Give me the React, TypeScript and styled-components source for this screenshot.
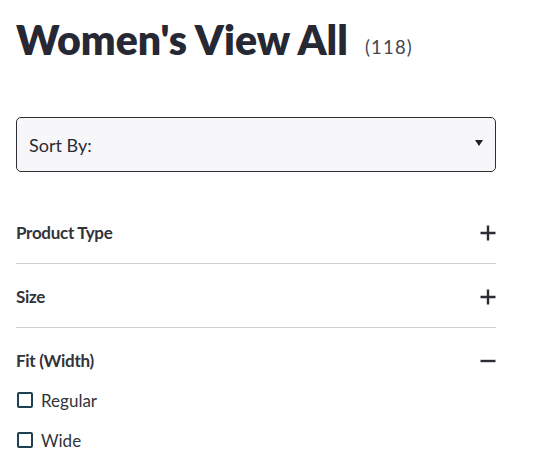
import React, { useState } from 'react'
import styled, { createGlobalStyle } from 'styled-components'

const GlobalStyle = createGlobalStyle`
  body {
    margin: 0;
    background: #ffffff;
    font-family: Lato, "Noto Sans", Arial, sans-serif;
    color: #2b2b33;
  }
`

interface Filter {
  label: string
  options: string[]
  open?: boolean
}

const filters: Filter[] = [
  { label: 'Product Type', options: [] },
  { label: 'Size', options: [] },
  { label: 'Fit (Width)', options: ['Regular', 'Wide'], open: true },
]

const PlusIcon = () => (
  <svg width="16" height="16" viewBox="0 0 16 16">
    <path d="M8 0.5v15M0.5 8h15" stroke="#2b2b33" strokeWidth="2.4" />
  </svg>
)

const MinusIcon = () => (
  <svg width="16" height="16" viewBox="0 0 16 16">
    <path d="M0.5 8h15" stroke="#2b2b33" strokeWidth="2.4" />
  </svg>
)

const FilterSection: React.FC<{ filter: Filter }> = ({ filter }) => {
  const [open, setOpen] = useState(!!filter.open)
  return (
    <StyledSection open={open}>
      <StyledSectionHeader onClick={() => setOpen(!open)}>
        <StyledSectionLabel>{filter.label}</StyledSectionLabel>
        {open ? <MinusIcon /> : <PlusIcon />}
      </StyledSectionHeader>
      {open && (
        <StyledOptionList>
          {filter.options.map((o) => (
            <StyledOption key={o}>
              <StyledCheckbox type="checkbox" />
              {o}
            </StyledOption>
          ))}
        </StyledOptionList>
      )}
    </StyledSection>
  )
}

const App: React.FC = () => {
  return (
    <>
      <GlobalStyle />
      <StyledPage>
        <StyledTitleRow>
          <StyledTitle>Women's View All</StyledTitle>
          <StyledCount>(118)</StyledCount>
        </StyledTitleRow>
        <StyledSelect>
          <span>Sort By:</span>
          <StyledArrow />
        </StyledSelect>
        <StyledFilters>
          {filters.map((f) => (
            <FilterSection key={f.label} filter={f} />
          ))}
        </StyledFilters>
      </StyledPage>
    </>
  )
}

const StyledPage = styled.div`
  padding: 0 40px 0 16px;
  width: 480px;
`

const StyledTitleRow = styled.div`
  display: flex;
  align-items: baseline;
  padding-top: 14px;
  height: 64px;
`

const StyledTitle = styled.h1`
  margin: 0;
  font-size: 41px;
  line-height: 52px;
  font-weight: 800;
  color: #262833;
  letter-spacing: 0;
`

const StyledCount = styled.span`
  margin-left: 17px;
  font-size: 18.5px;
  color: #46464e;
  letter-spacing: 1.2px;
  position: relative;
  top: -1px;
`

const StyledSelect = styled.div`
  margin-top: 39px;
  height: 55px;
  box-sizing: border-box;
  border: 1px solid #2f2f36;
  border-radius: 5px;
  background: #f7f7fa;
  display: flex;
  align-items: center;
  justify-content: space-between;
  padding: 0 12px 0 12px;
  font-size: 18px;
  color: #2b2b33;
`

const StyledArrow = styled.span`
  width: 0;
  height: 0;
  border-left: 4.5px solid transparent;
  border-right: 4.5px solid transparent;
  border-top: 6px solid #222;
  margin-top: -3px;
`

const StyledFilters = styled.div`
  margin-top: 28px;
`

const StyledSection = styled.div<{ open: boolean }>`
  border-bottom: ${(props) => (props.open ? 'none' : '1px solid #cfcfd2')};
`

const StyledSectionHeader = styled.div`
  display: flex;
  align-items: center;
  justify-content: space-between;
  padding: 22px 0 19px 0;
  height: 22px;
  cursor: pointer;
`

const StyledSectionLabel = styled.span`
  font-size: 17px;
  font-weight: 700;
  color: #33333a;
  letter-spacing: -0.3px;
  position: relative;
  top: -1px;
`

const StyledOptionList = styled.div`
  display: flex;
  flex-direction: column;
  gap: 22px;
`

const StyledOption = styled.label`
  display: flex;
  align-items: center;
  height: 18px;
  font-size: 17px;
  color: #33333a;
`

const StyledCheckbox = styled.input`
  appearance: none;
  margin: 0 8px 0 1px;
  width: 16px;
  height: 16px;
  box-sizing: border-box;
  border: 2px solid #1f3f55;
  border-radius: 2px;
  background: #fff;
`

export default App
